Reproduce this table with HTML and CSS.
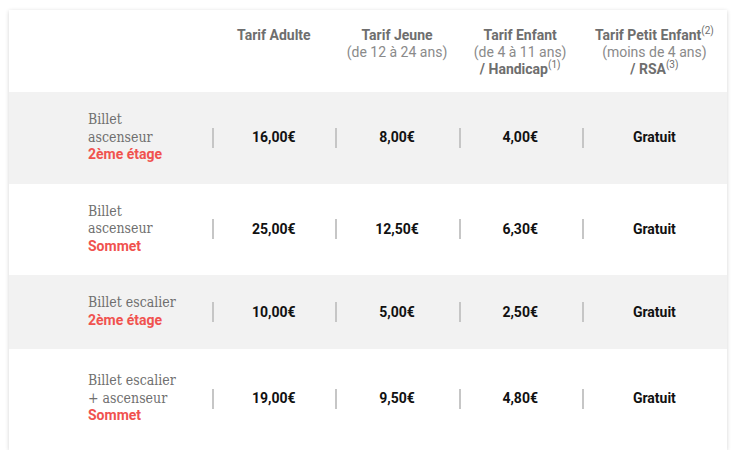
FILE: index.html
```html
<!DOCTYPE html>
<html>
<head>
    <meta charset="UTF-8">
    <title>Tarifs</title>
    <link rel="stylesheet" href="styles.css">
</head>
<body>
    <div class="card">
        <table class="tarifs">
            <thead>
                <tr>
                    <th class="empty"></th>
                    <th><b>Tarif Adulte</b></th>
                    <th><b>Tarif Jeune</b><br>(de 12 à 24 ans)</th>
                    <th><b>Tarif Enfant</b><br>(de 4 à 11 ans)<br><b>/ Handicap<sup>(1)</sup></b></th>
                    <th><b>Tarif Petit Enfant<sup>(2)</sup></b><br>(moins de 4 ans)<br><b>/ RSA<sup>(3)</sup></b></th>
                </tr>
            </thead>
            <tbody>
                <tr class="grey">
                    <td class="label"><div>Billet<br>ascenseur<span class="red">2ème étage</span></div></td>
                    <td class="price">16,00€</td>
                    <td class="price">8,00€</td>
                    <td class="price">4,00€</td>
                    <td class="price">Gratuit</td>
                </tr>
                <tr>
                    <td class="label"><div>Billet<br>ascenseur<span class="red">Sommet</span></div></td>
                    <td class="price">25,00€</td>
                    <td class="price">12,50€</td>
                    <td class="price">6,30€</td>
                    <td class="price">Gratuit</td>
                </tr>
                <tr class="grey">
                    <td class="label"><div>Billet escalier<span class="red">2ème étage</span></div></td>
                    <td class="price">10,00€</td>
                    <td class="price">5,00€</td>
                    <td class="price">2,50€</td>
                    <td class="price">Gratuit</td>
                </tr>
                <tr class="last">
                    <td class="label"><div>Billet escalier<br>+ ascenseur<span class="red">Sommet</span></div></td>
                    <td class="price">19,00€</td>
                    <td class="price">9,50€</td>
                    <td class="price">4,80€</td>
                    <td class="price">Gratuit</td>
                </tr>
            </tbody>
        </table>
    </div>
</body>
</html>
```

FILE: styles.css
```css
body {
    margin: 0;
    background: #fff;
    font-family: Roboto, "Liberation Sans", sans-serif;
}

.card {
    width: 718px;
    margin: 10px 0 0 9px;
    background: #fff;
    box-shadow: 0 1px 4px rgba(0, 0, 0, 0.18);
}

.tarifs {
    width: 100%;
    border-collapse: collapse;
    table-layout: fixed;
}

.tarifs th {
    height: 82px;
    box-sizing: border-box;
    padding: 17px 0 0;
    vertical-align: top;
    text-align: center;
    font-size: 14px;
    line-height: 17px;
    font-weight: normal;
    color: #8a8a8a;
    width: 123px;
}

.tarifs th b {
    color: #6e6e6e;
    font-weight: 700;
}

.tarifs th.empty {
    width: 203px;
}

.tarifs th:last-child {
    width: 145px;
}

.tarifs sup {
    font-size: 10px;
    line-height: 0;
    vertical-align: 6px;
    font-weight: normal;
}

.tarifs tr.grey td {
    background: #f2f2f2;
}

.tarifs td {
    padding: 19px 0 20px;
    vertical-align: middle;
}

.tarifs tr.last td {
    padding: 23px 0 25px;
}

.label div {
    margin-left: 79px;
    font-family: "DejaVu Serif Condensed", "DejaVu Serif", serif;
    font-size: 14px;
    line-height: 17.5px;
    color: #6f6f6f;
}

.red {
    display: block;
    font-family: Roboto, sans-serif;
    font-weight: 700;
    color: #f0524f;
    font-size: 14px;
}

.price {
    position: relative;
    text-align: center;
    font-size: 14px;
    font-weight: 700;
    color: #111;
}

.price::before {
    content: "";
    position: absolute;
    left: 0;
    top: 50%;
    margin-top: -10px;
    width: 2px;
    height: 20px;
    background: #c6c6c6;
}
```
